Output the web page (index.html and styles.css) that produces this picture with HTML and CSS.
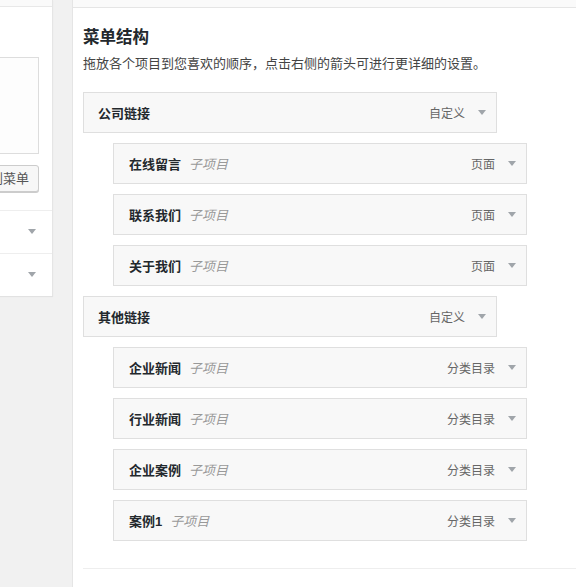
FILE: index.html
```html
<!DOCTYPE html>
<html lang="zh-CN">
<head>
<meta charset="utf-8">
<title>菜单结构</title>
<link rel="stylesheet" href="styles.css">
</head>
<body>
<div class="layout">
  <aside class="side">
    <div class="side-top"></div>
    <div class="side-body">
      <div class="side-box"></div>
      <div class="side-actions"><button class="btn">添加到菜单</button></div>
    </div>
    <div class="side-section"><span class="side-label">文章</span><svg class="arrow" width="8" height="5" viewBox="0 0 8 5"><polygon points="0,0 8,0 4,5"/></svg></div>
    <div class="side-section"><span class="side-label">分类目录</span><svg class="arrow" width="8" height="5" viewBox="0 0 8 5"><polygon points="0,0 8,0 4,5"/></svg></div>
  </aside>
  <main class="main">
    <div class="main-top"></div>
    <div class="main-body">
      <h3 class="title">菜单结构</h3>
      <p class="desc">拖放各个项目到您喜欢的顺序，点击右侧的箭头可进行更详细的设置。</p>
      <ul class="menu">
        <li class="item"><span class="name">公司链接</span><span class="type">自定义</span><svg class="arrow" width="8" height="5" viewBox="0 0 8 5"><polygon points="0,0 8,0 4,5"/></svg></li>
        <li class="item sub"><span class="name">在线留言</span><em class="sub-label">子项目</em><span class="type">页面</span><svg class="arrow" width="8" height="5" viewBox="0 0 8 5"><polygon points="0,0 8,0 4,5"/></svg></li>
        <li class="item sub"><span class="name">联系我们</span><em class="sub-label">子项目</em><span class="type">页面</span><svg class="arrow" width="8" height="5" viewBox="0 0 8 5"><polygon points="0,0 8,0 4,5"/></svg></li>
        <li class="item sub"><span class="name">关于我们</span><em class="sub-label">子项目</em><span class="type">页面</span><svg class="arrow" width="8" height="5" viewBox="0 0 8 5"><polygon points="0,0 8,0 4,5"/></svg></li>
        <li class="item"><span class="name">其他链接</span><span class="type">自定义</span><svg class="arrow" width="8" height="5" viewBox="0 0 8 5"><polygon points="0,0 8,0 4,5"/></svg></li>
        <li class="item sub"><span class="name">企业新闻</span><em class="sub-label">子项目</em><span class="type">分类目录</span><svg class="arrow" width="8" height="5" viewBox="0 0 8 5"><polygon points="0,0 8,0 4,5"/></svg></li>
        <li class="item sub"><span class="name">行业新闻</span><em class="sub-label">子项目</em><span class="type">分类目录</span><svg class="arrow" width="8" height="5" viewBox="0 0 8 5"><polygon points="0,0 8,0 4,5"/></svg></li>
        <li class="item sub"><span class="name">企业案例</span><em class="sub-label">子项目</em><span class="type">分类目录</span><svg class="arrow" width="8" height="5" viewBox="0 0 8 5"><polygon points="0,0 8,0 4,5"/></svg></li>
        <li class="item sub"><span class="name">案例1</span><em class="sub-label">子项目</em><span class="type">分类目录</span><svg class="arrow" width="8" height="5" viewBox="0 0 8 5"><polygon points="0,0 8,0 4,5"/></svg></li>
      </ul>
      <div class="rule"></div>
    </div>
  </main>
</div>
</body>
</html>
```
FILE: styles.css
```css
* { box-sizing: border-box; }
html, body {
  margin: 0;
  padding: 0;
}
body {
  width: 576px;
  height: 587px;
  overflow: hidden;
  background: #f1f1f1;
  font-family: "Liberation Sans", "Noto Sans CJK SC", sans-serif;
  font-size: 13px;
  color: #444;
}
.layout {
  display: flex;
  align-items: flex-start;
  gap: 19px;
  height: 587px;
}

/* left panel */
.side {
  width: 53px;
  flex: none;
  background: #fff;
  border-right: 1px solid #e5e5e5;
  box-shadow: 0 1px 1px rgba(0,0,0,0.06);
  overflow: hidden;
}
.side-top {
  height: 7px;
  background: #fafafa;
  border-bottom: 1px solid #e8e8e8;
}
.side-body {
  display: flex;
  flex-direction: column;
  align-items: flex-end;
  padding: 50px 13px 18px 0;
  border-bottom: 1px solid #eee;
}
.side-box {
  width: 250px;
  height: 97px;
  flex: none;
  border: 1px solid #ddd;
  background: #fdfdfd;
}
.side-actions {
  display: flex;
  justify-content: flex-end;
  margin-top: 11px;
}
.btn {
  flex: none;
  height: 27px;
  padding: 0 9px;
  border: 1px solid #ccc;
  border-radius: 3px;
  background: #f7f7f7;
  box-shadow: 0 1px 0 #ccc;
  font-family: "Liberation Sans", "Noto Sans CJK SC", sans-serif;
  font-size: 13px;
  line-height: 25px;
  color: #555;
  white-space: nowrap;
}
.side-section {
  height: 43px;
  display: flex;
  align-items: center;
  justify-content: flex-end;
  padding-right: 16px;
  border-bottom: 1px solid #eee;
}
.side-section:last-child { border-bottom: 0; height: 42px; }
.side-label {
  display: none;
}
.side-section .arrow { margin-top: -2px; }

/* right panel */
.main {
  flex: 1;
  height: 600px;
  background: #fff;
  border-left: 1px solid #e5e5e5;
}
.main-top {
  height: 8px;
  background: #fafafa;
  border-bottom: 1px solid #e5e5e5;
}
.main-body {
  padding-left: 10px;
}
.title {
  margin: 19px 0 0;
  font-size: 16.5px;
  line-height: 20px;
  font-weight: bold;
  color: #23282d;
}
.desc {
  margin: 8px 0 0;
  font-size: 13px;
  line-height: 18px;
  color: #444;
}
.menu {
  list-style: none;
  margin: 19px 0 0;
  padding: 0;
}
.item {
  width: 414px;
  height: 41px;
  margin-top: 10px;
  display: flex;
  align-items: center;
  padding: 0 10px 0 14px;
  background: #f8f8f8;
  border: 1px solid #dfdfdf;
}
.item:first-child { margin-top: 0; }
.item.sub {
  margin-left: 30px;
  padding-left: 15px;
}
.name {
  font-weight: bold;
  font-size: 13px;
  color: #23282d;
}
.sub-label {
  margin-left: 8px;
  font-style: italic;
  font-size: 13px;
  color: #999;
}
.type {
  margin-left: auto;
  font-size: 12px;
  color: #666;
}
.arrow {
  display: block;
  margin-left: 13px;
  fill: #a0a5aa;
}
.rule {
  margin-top: 27px;
  height: 1px;
  background: #eee;
}
```
